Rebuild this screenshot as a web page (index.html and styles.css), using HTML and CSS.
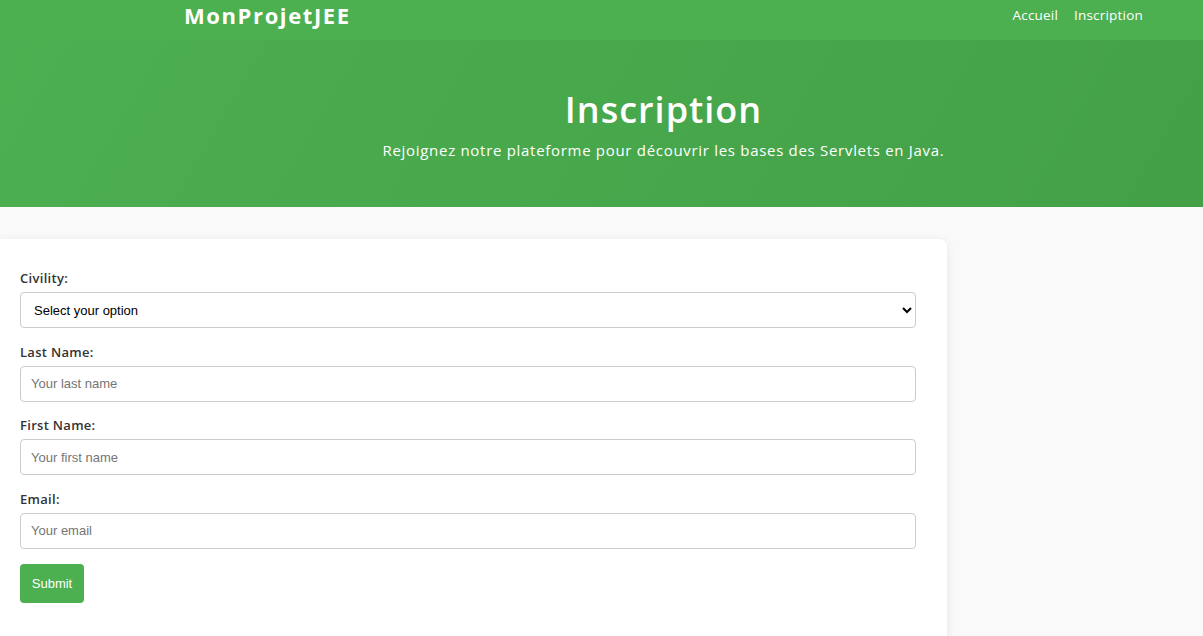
FILE: index.html
```html
<!DOCTYPE html>
<html lang="fr">
<head>
<meta charset="utf-8">
<title>Inscription</title>
<link rel="stylesheet" href="styles.css">
</head>
<body>
<header class="topbar">
  <div class="brand">MonProjetJEE</div>
  <nav class="nav">
    <a href="#">Accueil</a>
    <a href="#">Inscription</a>
  </nav>
</header>
<section class="hero">
  <h1>Inscription</h1>
  <p>Rejoignez notre plateforme pour découvrir les bases des Servlets en Java.</p>
</section>
<main class="content">
  <form class="card">
    <label class="label" for="civ">Civility:</label>
    <select id="civ" class="field select">
      <option>Select your option</option>
    </select>
    <label class="label" for="ln">Last Name:</label>
    <input id="ln" class="field" type="text" placeholder="Your last name">
    <label class="label" for="fn">First Name:</label>
    <input id="fn" class="field" type="text" placeholder="Your first name">
    <label class="label" for="em">Email:</label>
    <input id="em" class="field" type="email" placeholder="Your email">
    <button class="submit" type="button">Submit</button>
  </form>
</main>
</body>
</html>
```
FILE: styles.css
```css
* { box-sizing: border-box; }
html, body { margin: 0; padding: 0; }
body {
  background: #f9f9f9;
  font-family: "Open Sans", "DejaVu Sans", sans-serif;
  color: #333;
  height: 636px;
  overflow: hidden;
}
.topbar {
  height: 40px;
  background: #4caf50;
  display: flex;
  align-items: center;
  justify-content: space-between;
  padding: 0 60px 0 184px;
}
.brand {
  color: #fff;
  font-weight: 700;
  font-size: 22px;
  letter-spacing: 1.6px;
  margin-top: -11px;
}
.nav {
  display: flex;
  gap: 16px;
  margin-top: -11px;
}
.nav a {
  color: #fff;
  text-decoration: none;
  font-size: 13.5px;
  letter-spacing: 0.2px;
}
.hero {
  height: 167px;
  background: linear-gradient(120deg, #4caf50 0%, #43a047 100%);
  color: #fff;
  text-align: center;
  padding-top: 46px;
  padding-left: 124px;
}
.hero h1 {
  margin: 0;
  font-size: 36px;
  font-weight: 600;
  letter-spacing: 1px;
  line-height: 48px;
}
.hero p {
  margin: 6px 0 0;
  font-size: 15px;
  letter-spacing: 0.7px;
  line-height: 20px;
}
.content {
  padding-top: 32px;
}
.card {
  width: 947px;
  min-height: 420px;
  background: #fff;
  border-radius: 0 8px 8px 0;
  box-shadow: 0 2px 10px rgba(0, 0, 0, 0.08);
  padding: 31px 31px 20px 20px;
  display: flex;
  flex-direction: column;
  align-items: flex-start;
}
.label {
  font-size: 13px;
  font-weight: 600;
  color: #333;
  letter-spacing: 0.3px;
  line-height: 17px;
  margin-bottom: 5px;
}
.field {
  width: 896px;
  height: 36px;
  border: 1px solid #ccc;
  border-radius: 4px;
  padding: 0 10px;
  font-family: "Liberation Sans", Arial, sans-serif;
  font-size: 13px;
  color: #000;
  background: #fff;
  margin-bottom: 15.6px;
}
.field::placeholder { color: #757575; }
.select { padding-left: 9px; }
.submit {
  margin-top: 0;
  width: 64px;
  height: 39px;
  border: none;
  border-radius: 4px;
  background: #4caf50;
  color: #fff;
  font-family: "Liberation Sans", Arial, sans-serif;
  font-size: 13px;
  padding: 0;
}
```
